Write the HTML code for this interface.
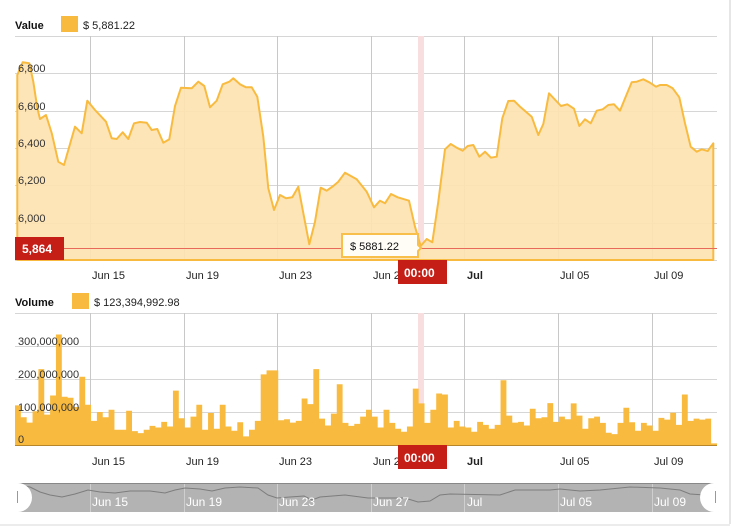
<!DOCTYPE html>
<html><head><meta charset="utf-8"><style>
html,body{margin:0;padding:0;background:#fff}
svg{display:block}
text{font-family:"Liberation Sans",sans-serif}
</style></head><body>
<svg width="734" height="528" viewBox="0 0 734 528" xmlns="http://www.w3.org/2000/svg">
<rect x="0" y="0" width="734" height="528" fill="#fff"/>
<line x1="730" y1="0" x2="730" y2="524" stroke="#e6e6e6" stroke-width="2"/>
<line x1="0" y1="525" x2="730" y2="525" stroke="#ececec" stroke-width="2"/>

<!-- Value header -->
<text x="15" y="29" font-size="11" font-weight="bold" fill="#111">Value</text>
<rect x="61" y="16" width="17" height="16" fill="#f8bb40"/>
<text x="83" y="29" font-size="11" fill="#222">$  5,881.22</text>

<!-- top grid -->
<g stroke="#d6d6d6" stroke-width="1">
<line x1="15" y1="36.5" x2="717" y2="36.5"/>
<line x1="15" y1="73.5" x2="717" y2="73.5"/>
<line x1="15" y1="111.5" x2="717" y2="111.5"/>
<line x1="15" y1="148.5" x2="717" y2="148.5"/>
<line x1="15" y1="185.5" x2="717" y2="185.5"/>
<line x1="15" y1="223.5" x2="717" y2="223.5"/>
<line x1="15" y1="260.5" x2="717" y2="260.5"/>
</g>
<g stroke="#c8c8c8" stroke-width="1">
<line x1="90.5" y1="36" x2="90.5" y2="260"/><line x1="184.5" y1="36" x2="184.5" y2="260"/>
<line x1="277.5" y1="36" x2="277.5" y2="260"/><line x1="371.5" y1="36" x2="371.5" y2="260"/>
<line x1="464.5" y1="36" x2="464.5" y2="260"/><line x1="558.5" y1="36" x2="558.5" y2="260"/>
<line x1="652.5" y1="36" x2="652.5" y2="260"/>
</g>
<rect x="418" y="36" width="6" height="224" fill="#f8dede"/>
<path fill="#fde3b2" fill-opacity="0.92" stroke="#f8bb40" stroke-width="2" stroke-linejoin="round" d="M17.3,75 L22.7,62.3 29.3,63.3 33.3,81.7 37.3,108 40,119 46,115 51.7,133 58.3,161.7 64,165 75,126.7 81.7,133.3 87.3,100.7 95,110 106,121.7 111.7,138.3 116.7,139 122.7,132.3 128.3,139 134,123.3 140,122 146.7,122.7 151.7,130 157.3,129 163.3,142.7 169.3,139.3 175,106 181,87.7 191.7,88.3 198.3,81.7 204.3,86 210,107.3 216.7,100.7 222.7,84.3 229.3,81.7 233.3,78.3 240,84.3 246,87.3 251.7,87.3 257.3,96.7 263.3,136.7 268.3,188.3 274,210 280,195 286,198.3 292.3,197.3 298.3,186.7 304,216.7 309.3,244.3 315,221.7 320.7,187.7 326.7,190.7 333.3,186 338.3,181.7 345,172.7 356.7,179.3 366.7,191.7 374,207.3 380,200.7 385,203.3 391,194 397.7,197.3 409,200.7 415,226.7 420.7,246 426.7,239 432.3,242.3 438.3,201.7 445,149.3 450.7,144 456.7,147.7 462.7,150.7 467.7,146 473.3,145 479.3,156.7 485,151.7 491,157.7 496.7,156.7 502.3,118.3 508.3,101 514,100.7 520.7,107.3 531.7,116.7 538.3,135 543.3,124 549,93.3 561,106 567.3,104.3 574,108.7 579.3,126 585,119.3 590.7,123.3 596.7,110.7 602.7,109.3 608.3,105 614,104.3 620,110.7 626,96 631.7,82.3 636.7,81.7 643.3,79.3 649.3,82.3 656,86.7 660,85 666.7,85 672.7,88.3 679.3,97.3 685,123.3 690.7,146.7 696.7,151.7 701.7,149.3 707.7,151 713.3,143.3 L713.3,260 L17.3,260 Z"/>
<line x1="15" y1="248.5" x2="717" y2="248.5" stroke="#e8695a" stroke-width="1"/>
<g font-size="11" fill="#333">
<text x="18" y="72">6,800</text><text x="18" y="110">6,600</text><text x="18" y="147">6,400</text>
<text x="18" y="184">6,200</text><text x="18" y="222">6,000</text>
</g>
<rect x="15" y="237" width="49" height="23" fill="#c41e16"/>
<text x="22" y="253" font-size="12" font-weight="bold" fill="#fff">5,864</text>
<!-- tooltip -->
<path d="M342,234 H418 V245 L421,248 L418,251 V257 H342 Z" fill="#fffdf6" stroke="#f8c04a" stroke-width="2"/>
<text x="350" y="250" font-size="11" fill="#111">$ 5881.22</text>
<!-- top x labels -->
<g font-size="11" fill="#222">
<text x="92" y="279">Jun 15</text><text x="186" y="279">Jun 19</text><text x="279" y="279">Jun 23</text>
<text x="373" y="279">Jun 2</text><text x="467" y="279" font-weight="bold">Jul</text>
<text x="560" y="279">Jul 05</text><text x="654" y="279">Jul 09</text>
</g>
<rect x="398" y="260" width="49" height="24" fill="#c41e16"/>
<text x="404" y="277" font-size="12" font-weight="bold" fill="#fff">00:00</text>

<!-- Volume header -->
<text x="15" y="306" font-size="11" font-weight="bold" fill="#111">Volume</text>
<rect x="72" y="293" width="17" height="16" fill="#f8bb40"/>
<text x="94" y="306" font-size="11" fill="#222">$  123,394,992.98</text>

<g stroke="#d6d6d6" stroke-width="1">
<line x1="15" y1="313.5" x2="717" y2="313.5"/>
<line x1="15" y1="346.5" x2="717" y2="346.5"/>
<line x1="15" y1="379.5" x2="717" y2="379.5"/>
<line x1="15" y1="412.5" x2="717" y2="412.5"/>
</g>
<g stroke="#c8c8c8" stroke-width="1">
<line x1="90.5" y1="313" x2="90.5" y2="445"/><line x1="184.5" y1="313" x2="184.5" y2="445"/>
<line x1="277.5" y1="313" x2="277.5" y2="445"/><line x1="371.5" y1="313" x2="371.5" y2="445"/>
<line x1="464.5" y1="313" x2="464.5" y2="445"/><line x1="558.5" y1="313" x2="558.5" y2="445"/>
<line x1="652.5" y1="313" x2="652.5" y2="445"/>
</g>
<rect x="418" y="313" width="6" height="132" fill="#f8dede"/>
<path fill="#f8bb40" d="M15,445 V405.4h5.85V417.3h5.85V422.6h5.85V411.3h5.85V369.1h5.85V414.6h5.85V395.5h5.85V334.5h5.85V396.8h5.85V397.8h5.85
V407h5.85V376.7h5.85V404.7h5.85V420.9h5.85V412h5.85V417.3h5.85V409.7h5.85V429.8h5.85V429.8h5.85V410.7h5.85
V431.1h5.85V433.1h5.85V429.8h5.85V425.9h5.85V427.5h5.85V421.9h5.85V426.5h5.85V390.6h5.85V418.3h5.85V427.5h5.85
V416.6h5.85V404.7h5.85V429.8h5.85V413h5.85V428.8h5.85V404.7h5.85V426.5h5.85V430.8h5.85V422.2h5.85V436.4h5.85
V429.8h5.85V420.9h5.85V374.4h5.85V370.4h5.85V370.4h5.85V420.3h5.85V419.3h5.85V422.6h5.85V420.9h5.85V398.5h5.85
V404.1h5.85V369.1h5.85V418.6h5.85V425.5h5.85V413.6h5.85V384.3h5.85V422.9h5.85V425.9h5.85V423.9h5.85V416.6h5.85
V409.7h5.85V416.6h5.85V427.5h5.85V409.7h5.85V422.9h5.85V428.8h5.85V431.8h5.85V426.5h5.85V388.6h5.85V403.4h5.85
V422.9h5.85V409.7h5.85V393.5h5.85V394.5h5.85V427.5h5.85V420.9h5.85V426.5h5.85V427.5h5.85V431.8h5.85V421.9h5.85
V424.9h5.85V428.8h5.85V424.9h5.85V380.3h5.85V415.6h5.85V422.6h5.85V421.9h5.85V425.5h5.85V408.7h5.85V418.3h5.85
V417.3h5.85V403.1h5.85V421.9h5.85V416.6h5.85V419.3h5.85V403.4h5.85V415.6h5.85V428.8h5.85V418.3h5.85V416.6h5.85
V422.9h5.85V432.8h5.85V434.1h5.85V422.9h5.85V407.7h5.85V422.2h5.85V430.8h5.85V422.9h5.85V425.5h5.85V430.8h5.85
V417.9h5.85V419.6h5.85V412.7h5.85V424.9h5.85V394.5h5.85V420.9h5.85V418.6h5.85V419.6h5.85V418.6h5.85V443.4h5.85
V445 Z"/>
<line x1="15" y1="445.5" x2="717" y2="445.5" stroke="#b8862a" stroke-width="1"/>
<g font-size="11" fill="#333">
<text x="18" y="345">300,000,000</text><text x="18" y="378">200,000,000</text>
<text x="18" y="411">100,000,000</text><text x="18" y="443">0</text>
</g>
<g font-size="11" fill="#222">
<text x="92" y="465">Jun 15</text><text x="186" y="465">Jun 19</text><text x="279" y="465">Jun 23</text>
<text x="373" y="465">Jun 2</text><text x="467" y="465" font-weight="bold">Jul</text>
<text x="560" y="465">Jul 05</text><text x="654" y="465">Jul 09</text>
</g>
<rect x="398" y="445" width="49" height="24" fill="#c41e16"/>
<text x="404" y="462" font-size="12" font-weight="bold" fill="#fff">00:00</text>

<!-- navigator -->
<rect x="15" y="483" width="702" height="29" fill="#b3b3b3"/>
<line x1="15" y1="483.5" x2="717" y2="483.5" stroke="#888"/>
<g stroke="#cfcfcf"><line x1="90.5" y1="484" x2="90.5" y2="512"/><line x1="184.5" y1="484" x2="184.5" y2="512"/><line x1="277.5" y1="484" x2="277.5" y2="512"/><line x1="371.5" y1="484" x2="371.5" y2="512"/><line x1="464.5" y1="484" x2="464.5" y2="512"/><line x1="558.5" y1="484" x2="558.5" y2="512"/><line x1="652.5" y1="484" x2="652.5" y2="512"/></g>
<polyline fill="none" stroke="#7d7d7d" stroke-width="1" points="17,485 30,487 40,492 50,495 62,497 75,494 88,490 100,492 115,493 130,491 150,491 165,493 175,490 185,488 200,489 212,491 225,488 240,487 258,488 268,495 277,498 290,497 304,496 312,500 320,497 345,495 368,498 385,498 405,498 418,502 430,501 440,495 450,494 500,495 515,490 550,490 560,489 580,491 600,490 630,487 660,488 680,490 690,494 705,495 716,493"/>
<path d="M15,483 H18 A14,14.5 0 0 1 18,512 H15 Z" fill="#fff"/>
<line x1="17.5" y1="491" x2="17.5" y2="503" stroke="#999"/>
<path d="M718,483 H714 A14,14.5 0 0 0 714,512 H718 Z" fill="#fff"/>
<line x1="715.5" y1="491" x2="715.5" y2="503" stroke="#999"/>
<g font-size="12" fill="#fff">
<text x="92" y="506">Jun 15</text><text x="186" y="506">Jun 19</text><text x="279" y="506">Jun 23</text>
<text x="373" y="506">Jun 27</text><text x="467" y="506">Jul</text>
<text x="560" y="506">Jul 05</text><text x="654" y="506">Jul 09</text>
</g>
</svg>
</body></html>
